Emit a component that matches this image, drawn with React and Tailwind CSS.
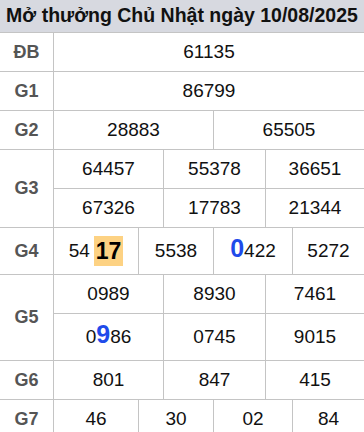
import React from 'react';

const COLS = 'grid grid-cols-[85px_25px_50px_52px_27px_71px]';

const Cell = ({ span, last, children }) => (
  <div
    className={`${span} flex items-center justify-center text-[19px] text-[#111] ${last ? '' : 'border-r border-[#c4c4c4]'}`}
  >
    {children}
  </div>
);

const Row = ({ label, h, children, noBorder }) => (
  <div className={`flex ${h} ${noBorder ? '' : 'border-b border-[#c4c4c4]'}`}>
    <div className="w-[54px] shrink-0 border-r border-[#c4c4c4] flex items-center justify-center text-[18px] font-bold text-[#555]">
      {label}
    </div>
    <div className="flex-1 flex flex-col">{children}</div>
  </div>
);

const Big = ({ children }) => (
  <span className="text-[25px] font-bold text-[#1f4bea] leading-none">{children}</span>
);

export default function App() {
  return (
    <div className="w-[364px] h-[432px] overflow-hidden bg-white font-['Liberation_Sans',Arial,sans-serif]">
      <div className="h-[33px] bg-[#d7d9e0] border-b border-[#c4c4c4] flex items-center justify-center text-[19.5px] font-bold text-[#111] whitespace-nowrap">
        Mở thưởng Chủ Nhật ngày 10/08/2025
      </div>

      <Row label="ĐB" h="h-[39px]">
        <div className="flex-1 flex items-center justify-center text-[19px] text-[#111]">61135</div>
      </Row>

      <Row label="G1" h="h-[39px]">
        <div className="flex-1 flex items-center justify-center text-[19px] text-[#111]">86799</div>
      </Row>

      <Row label="G2" h="h-[39px]">
        <div className={`${COLS} flex-1`}>
          <Cell span="col-span-3">28883</Cell>
          <Cell span="col-span-3" last>65505</Cell>
        </div>
      </Row>

      <Row label="G3" h="h-[78px]">
        <div className={`${COLS} h-[39px] border-b border-[#c4c4c4]`}>
          <Cell span="col-span-2">64457</Cell>
          <Cell span="col-span-2">55378</Cell>
          <Cell span="col-span-2" last>36651</Cell>
        </div>
        <div className={`${COLS} flex-1`}>
          <Cell span="col-span-2">67326</Cell>
          <Cell span="col-span-2">17783</Cell>
          <Cell span="col-span-2" last>21344</Cell>
        </div>
      </Row>

      <Row label="G4" h="h-[47px]">
        <div className={`${COLS} flex-1`}>
          <Cell span="col-span-1">
            <span>54</span>
            <span className="ml-[4px] px-[2px] h-[30px] bg-[#fdd283] text-[23px] font-bold text-black flex items-center">17</span>
          </Cell>
          <Cell span="col-span-2">5538</Cell>
          <Cell span="col-span-2">
            <span className="flex items-baseline">
              <Big>0</Big>
              <span>422</span>
            </span>
          </Cell>
          <Cell span="col-span-1" last>5272</Cell>
        </div>
      </Row>

      <Row label="G5" h="h-[86px]">
        <div className={`${COLS} h-[39px] border-b border-[#c4c4c4]`}>
          <Cell span="col-span-2">0989</Cell>
          <Cell span="col-span-2">8930</Cell>
          <Cell span="col-span-2" last>7461</Cell>
        </div>
        <div className={`${COLS} flex-1`}>
          <Cell span="col-span-2">
            <span className="flex items-baseline">
              <span>0</span>
              <Big>9</Big>
              <span>86</span>
            </span>
          </Cell>
          <Cell span="col-span-2">0745</Cell>
          <Cell span="col-span-2" last>9015</Cell>
        </div>
      </Row>

      <Row label="G6" h="h-[39px]">
        <div className={`${COLS} flex-1`}>
          <Cell span="col-span-2">801</Cell>
          <Cell span="col-span-2">847</Cell>
          <Cell span="col-span-2" last>415</Cell>
        </div>
      </Row>

      <Row label="G7" h="h-[39px]" noBorder>
        <div className={`${COLS} flex-1`}>
          <Cell span="col-span-1">46</Cell>
          <Cell span="col-span-2">30</Cell>
          <Cell span="col-span-2">02</Cell>
          <Cell span="col-span-1" last>84</Cell>
        </div>
      </Row>
    </div>
  );
}
